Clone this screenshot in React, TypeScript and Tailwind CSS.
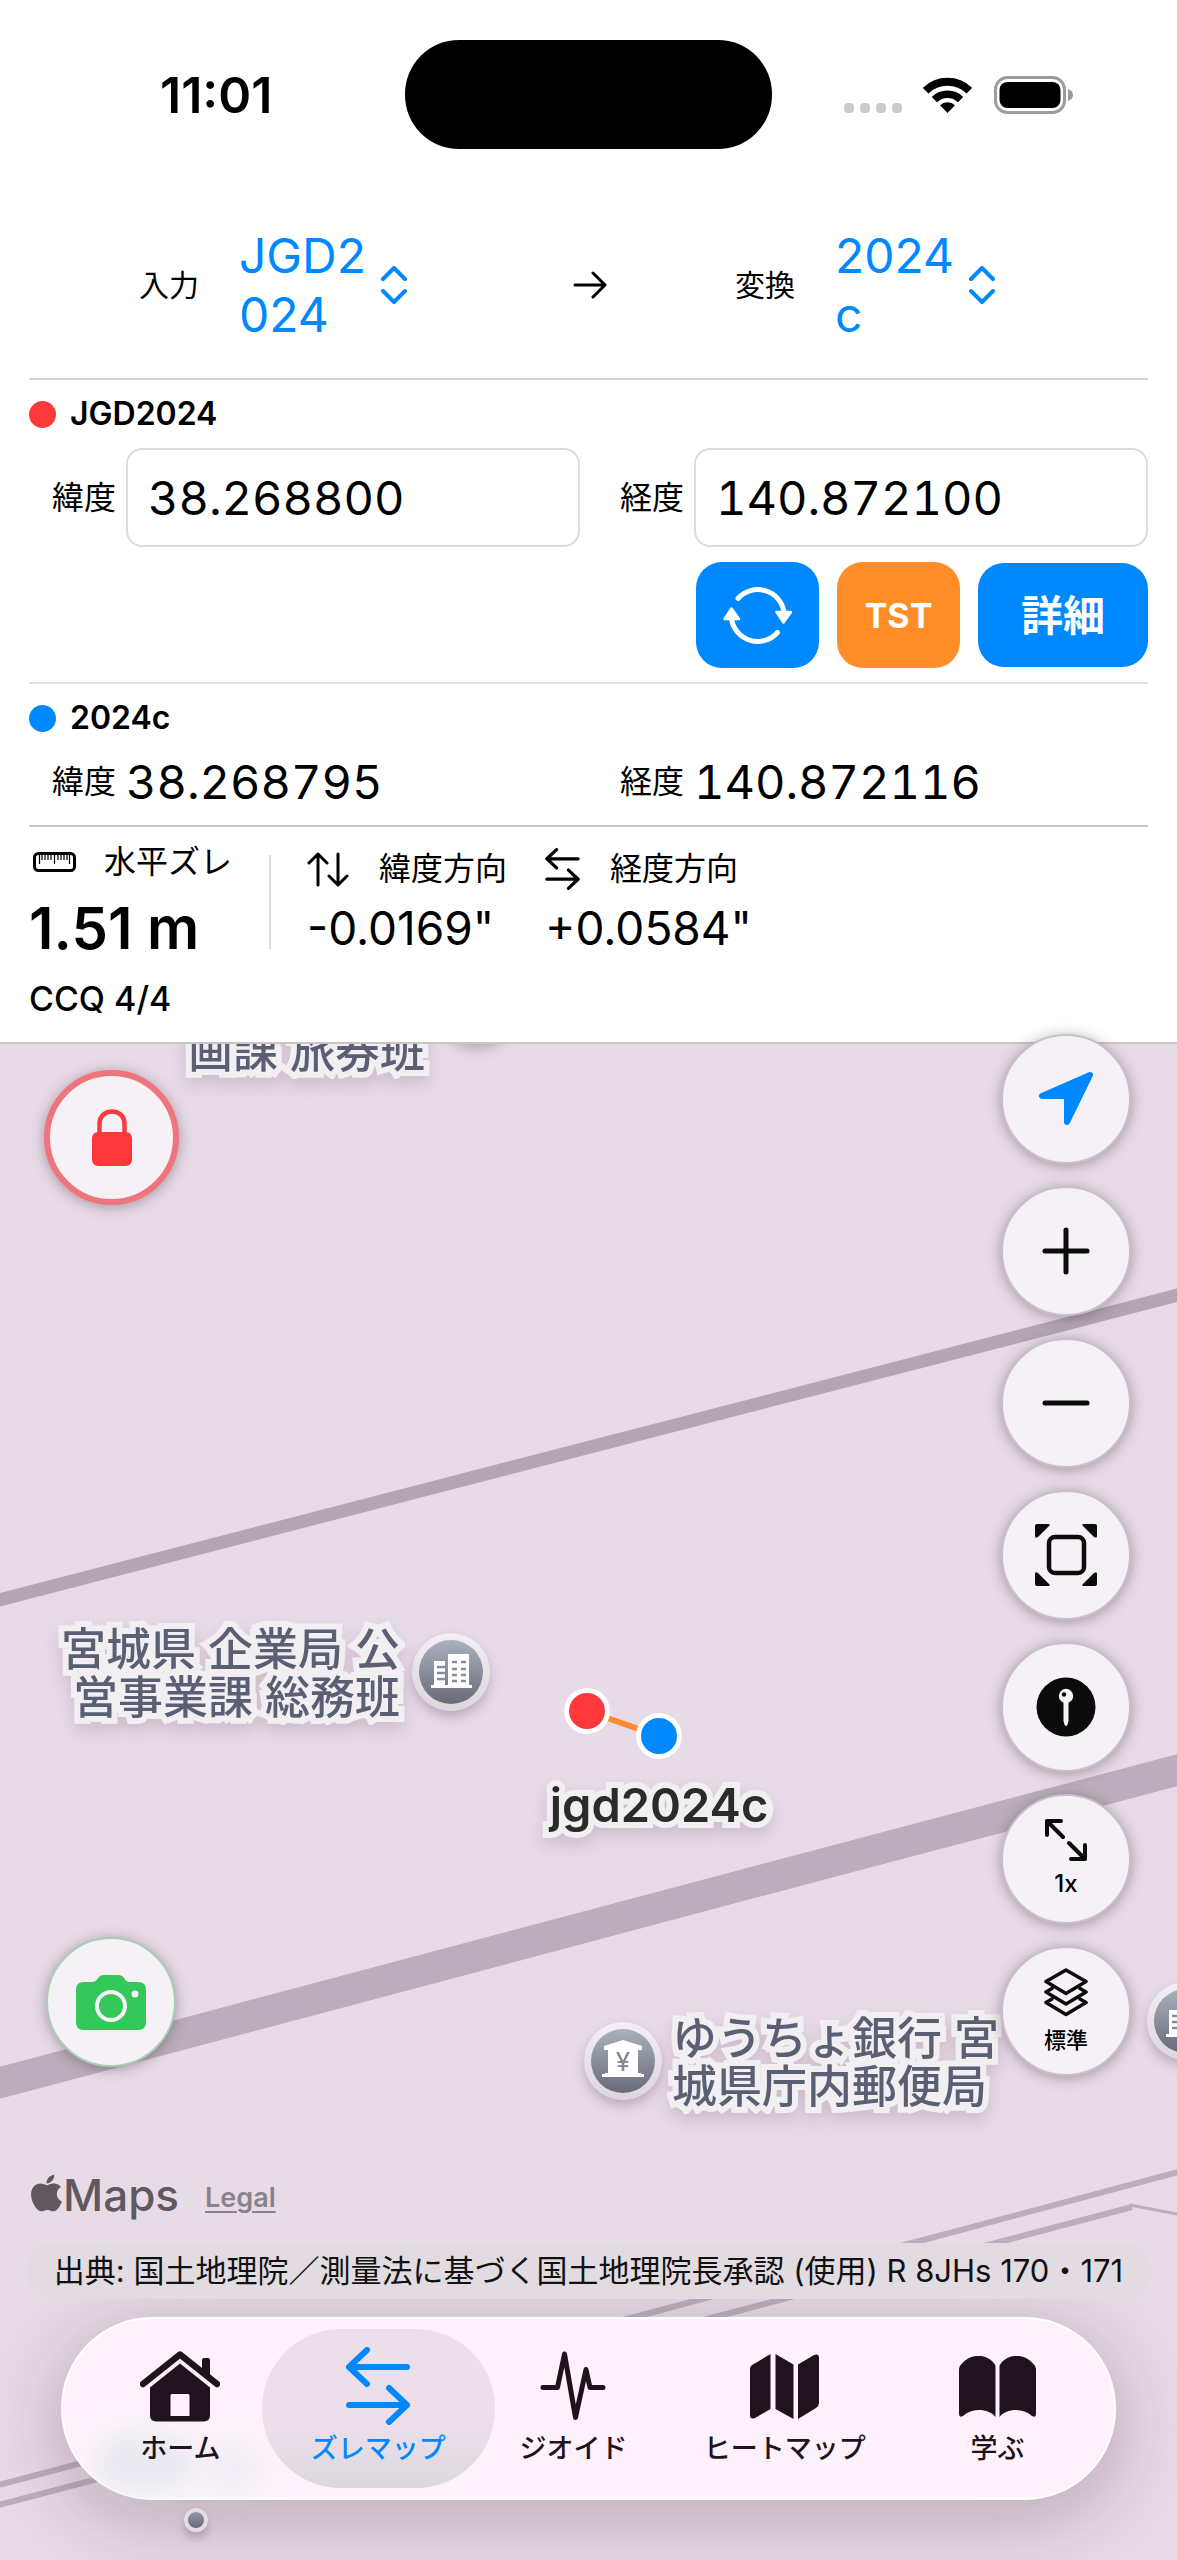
import { useState } from "react";
import type { ReactNode } from "react";
import { FaApple } from "react-icons/fa";

const DATUMS = ["JGD2024", "JGD2011", "2024c", "WGS84"];

interface IconProps {
    className?: string;
}

/* ---------- icons ---------- */

function WifiIcon() {
    return (
        <svg className="w-[49px] h-[36px]" viewBox="0 0 49 36" fill="none" stroke="#000" strokeWidth="8" aria-hidden="true">
            <path d="M2.6 13.7A31.5 31.5 0 0 1 46.4 13.7" />
            <path d="M11.4 22.6A18.8 18.8 0 0 1 37.6 22.6" strokeWidth="7.5" />
            <path d="M24.5 36L17 28.2A10.8 10.8 0 0 1 32 28.2Z" fill="#000" stroke="none" />
        </svg>
    );
}

function BatteryIcon() {
    return (
        <svg className="w-[79px] h-[38px]" viewBox="0 0 79 38" aria-hidden="true">
            <rect x="1.5" y="1.5" width="69" height="35" rx="12" fill="none" stroke="#9c9c9c" strokeWidth="3" />
            <rect x="5.5" y="6" width="61" height="26" rx="8" />
            <path d="M74 13C77 14 79 16 79 19S77 24 74 25Z" fill="#9c9c9c" />
        </svg>
    );
}

function ChevronUpDownIcon() {
    return (
        <svg className="w-[28px] h-[38px]" viewBox="0 0 28 38" fill="none" stroke="currentColor" strokeWidth="4" strokeLinecap="round" strokeLinejoin="round" aria-hidden="true">
            <path d="M3 13L14 2L25 13M3 25L14 36L25 25" />
        </svg>
    );
}

function ArrowRightIcon() {
    return (
        <svg className="w-[34px] h-[28px]" viewBox="0 0 34 28" fill="none" stroke="#000" strokeWidth="3" strokeLinecap="round" strokeLinejoin="round" aria-hidden="true">
            <path d="M2 14H32M20 2L32 14L20 26" />
        </svg>
    );
}

function SyncIcon() {
    return (
        <svg className="w-[69px] h-[59px]" viewBox="0 0 69 59" fill="none" stroke="#fff" strokeWidth="5" strokeLinecap="round" aria-hidden="true">
            <path d="M15 12.5A26.500 26.500 0 0 1 61 26" />
            <path d="M54.5 46.500A26.500 26.500 0 0 1 8.500 33" />
            <path d="M53.500 26H68L60.500 36.500Z" fill="#fff" strokeWidth="2.500" strokeLinejoin="round" />
            <path d="M1.500 33H16L8.500 22.500Z" fill="#fff" strokeWidth="2.500" strokeLinejoin="round" />
        </svg>
    );
}

function RulerIcon() {
    return (
        <svg className="w-[43px] h-[20px]" viewBox="0 0 43 20" fill="none" stroke="#000" aria-hidden="true">
            <rect x="1.5" y="1.5" width="40" height="17" rx="4" strokeWidth="3" />
            <path d="M6.500 2V12M9 2V8M12 2V8M15 2V8M18 2V8M21.500 2V12M25 2V8M28 2V8M31 2V8M34 2V8M36.500 2V12" strokeWidth="1.2" />
        </svg>
    );
}

function UpDownIcon() {
    return (
        <svg className="w-[42px] h-[35px]" viewBox="0 0 42 35" fill="none" stroke="#000" strokeWidth="3" strokeLinecap="round" strokeLinejoin="round" aria-hidden="true">
            <path d="M11 33V2M2 11L11 2L20 11M31 2V33M22 24L31 33L40 24" />
        </svg>
    );
}

function SwapIcon({ className }: IconProps) {
    return (
        <svg className={className} viewBox="0 0 64 78" fill="none" stroke="currentColor" strokeWidth="6" strokeLinecap="round" strokeLinejoin="round" aria-hidden="true">
            <path d="M61 20H3M21 3L3 20L21 37M3 58H61M43 41L61 58L43 75" />
        </svg>
    );
}

function LockIcon() {
    return (
        <svg className="w-[40px] h-[57px]" viewBox="0 0 40 57" aria-hidden="true">
            <rect y="23" width="40" height="34" rx="6" fill="#ff383c" />
            <path d="M7.500 25V15C7.500 7 13 2.500 20 2.500S32.500 7 32.500 15V25" fill="none" stroke="#ff383c" strokeWidth="4.500" />
        </svg>
    );
}

function CameraIcon() {
    return (
        <svg className="w-[70px] h-[55px]" viewBox="0 0 70 55" aria-hidden="true">
            <path d="M8 7H16C19 7 20.500 5.500 22 3C23.500 1 25 0 28 0H42C45 0 46.500 1 48 3C49.500 5.500 51 7 54 7H62C67.500 7 70 10 70 15V47C70 52 67.500 55 62 55H8C2.500 55 0 52 0 47V15C0 10 2.500 7 8 7Z" fill="#34c759" />
            <circle cx="35" cy="31" r="14" fill="none" stroke="#f6f1f6" strokeWidth="4" />
            <circle cx="59" cy="19" r="3.500" fill="#f6f1f6" />
        </svg>
    );
}

function LocationIcon() {
    return (
        <svg className="w-[56px] h-[56px]" viewBox="0 0 56 56" fill="#0088ff" stroke="#0088ff" strokeWidth="6" strokeLinejoin="round" aria-hidden="true">
            <path d="M52 4L4 25H29V51Z" />
        </svg>
    );
}

function PlusIcon() {
    return (
        <svg className="w-[48px] h-[48px]" viewBox="0 0 48 48" stroke="#0b0b0b" strokeWidth="5" strokeLinecap="round" aria-hidden="true">
            <path d="M3 24H45M24 3V45" />
        </svg>
    );
}

function MinusIcon() {
    return (
        <svg className="w-[48px] h-[48px]" viewBox="0 0 48 48" stroke="#0b0b0b" strokeWidth="5" strokeLinecap="round" aria-hidden="true">
            <path d="M3 24H45" />
        </svg>
    );
}

function FitIcon() {
    return (
        <svg className="w-[62px] h-[62px]" viewBox="0 0 62 62" fill="#0b0b0b" aria-hidden="true">
            <rect x="14" y="13" width="35" height="36" rx="6" fill="none" stroke="#0b0b0b" strokeWidth="4.500" />
            <path d="M2 0H13Q16 0 14 2L3 13Q0 15 0 12V2Q0 0 2 0Z" />
            <path d="M60 0H49Q46 0 48 2L59 13Q62 15 62 12V2Q62 0 60 0Z" />
            <path d="M2 62H13Q16 62 14 60L3 49Q0 47 0 50V60Q0 62 2 62Z" />
            <path d="M60 62H49Q46 62 48 60L59 49Q62 47 62 50V60Q62 62 60 62Z" />
        </svg>
    );
}

function PinIcon() {
    return (
        <svg className="w-[60px] h-[60px]" viewBox="0 0 60 60" aria-hidden="true">
            <circle cx="30" cy="30" r="29.500" fill="#0b0b0b" />
            <path d="M27.500 24H32.500V44Q31.500 49 30 49Q28.500 49 27.500 44Z" fill="#f6f1f6" />
            <circle cx="30" cy="19" r="7.200" fill="#f6f1f6" />
            <circle cx="28" cy="17.500" r="2.200" fill="#0b0b0b" />
        </svg>
    );
}

function ExpandIcon() {
    return (
        <svg className="w-[42px] h-[42px]" viewBox="0 0 42 42" fill="none" stroke="#0b0b0b" strokeWidth="4" strokeLinecap="round" strokeLinejoin="round" aria-hidden="true">
            <path d="M2 16V2H16M2 2L18 18M40 26V40H26M40 40L24 24" />
        </svg>
    );
}

function LayersIcon() {
    return (
        <svg className="w-[44px] h-[49px]" viewBox="0 0 44 49" fill="none" stroke="#0b0b0b" strokeWidth="3.500" strokeLinejoin="round" strokeLinecap="round" aria-hidden="true">
            <path d="M22 2L42 13.500L22 25.500L2 13.500Z" />
            <path d="M8 20.500L2 24L22 36L42 24L36 20.500" />
            <path d="M8 31L2 34.500L22 46.500L42 34.500L36 31" />
        </svg>
    );
}

function HomeIcon() {
    return (
        <svg className="w-[80px] h-[71px]" viewBox="0 0 80 71" aria-hidden="true">
            <path d="M3 33L40 3.500L77 33" fill="none" stroke="currentColor" strokeWidth="6.500" strokeLinecap="round" strokeLinejoin="round" />
            <path d="M62 20V9Q62 7 64 7H68Q70 7 70 9V28Z" fill="currentColor" />
            <path fillRule="evenodd" d="M40 12.500L70 36.500V64Q70 70.500 63.500 70.500H16.500Q10 70.500 10 64V36.500ZM32 43Q30.500 43 30.500 44.500V65H49.500V44.500Q49.500 43 48 43Z" fill="currentColor" />
        </svg>
    );
}

function PulseIcon() {
    return (
        <svg className="w-[66px] h-[70px]" viewBox="0 0 66 70" fill="none" stroke="currentColor" strokeWidth="5" strokeLinecap="round" strokeLinejoin="round" aria-hidden="true">
            <path d="M3 36.500H17.500L24.500 3L35.500 66.500L46 18.500L50 36.500H63" />
        </svg>
    );
}

function MapIcon() {
    return (
        <svg className="w-[69px] h-[65px]" viewBox="0 0 69 65" fill="currentColor" aria-hidden="true">
            <path d="M0 15Q0 12 3 10.500L20.500 0V55L5 64Q0 66 0 61Z" />
            <path d="M25.500 0L43.500 10.500V65L25.500 55Z" />
            <path d="M48 10.500L64 1Q69 -1 69 4V49Q69 52 66 54L48 65Z" />
        </svg>
    );
}

function BookIcon() {
    return (
        <svg className="w-[77px] h-[61px]" viewBox="0 0 77 61" fill="currentColor" aria-hidden="true">
            <path d="M0 13Q0 10 3 7.500C12 -2.500 26 -2.500 34 6Q36.500 8.500 36.500 11V61C29 52 13 52 4 60Q0 62 0 58Z" />
            <path d="M77 13Q77 10 74 7.500C65 -2.500 51 -2.500 43 6Q40.500 8.500 40.500 11V61C48 52 64 52 73 60Q77 62 77 58Z" />
        </svg>
    );
}

/* ---------- small parts ---------- */

function DatumPicker({ label, id, lines, value, onChange }: { label: string; id: string; lines: string[]; value: string; onChange: (v: string) => void }) {
    return (
        <div className="flex items-center">
            <label htmlFor={id} className="w-[100px] text-[30px]">{label}</label>
            <div className="relative flex items-center gap-[14px] text-[#0088ff]">
                <div className="text-[48px] leading-[59px]" aria-hidden="true">
                    {lines.map((line) => (
                        <div key={line}>{line}</div>
                    ))}
                </div>
                <ChevronUpDownIcon />
                <select id={id} value={value} onChange={(e) => onChange(e.target.value)} className="absolute inset-0 opacity-0">
                    {DATUMS.map((d) => (
                        <option key={d}>{d}</option>
                    ))}
                </select>
            </div>
        </div>
    );
}

function DatumHeading({ name, dot }: { name: string; dot: string }) {
    return (
        <h2 className="flex items-center gap-[14px] h-10 text-[32px] font-semibold">
            <span className={`w-[27px] h-[27px] rounded-full ${dot}`} />
            {name}
        </h2>
    );
}

function RoundButton({ label, children }: { label: string; children: ReactNode }) {
    return (
        <button
            aria-label={label}
            className="w-[130px] h-[130px] rounded-full bg-[#f6f1f6] border-2 border-[#c9bfc9] shadow-[0_2px_14px_rgba(60,35,55,0.4)] flex flex-col items-center justify-center"
        >
            {children}
        </button>
    );
}

function PlaceBadge({ children }: { children?: ReactNode }) {
    return (
        <svg className="w-[78px] h-[78px] -mt-1 shrink-0 rounded-full shadow-[0_6px_12px_rgba(90,60,85,0.3)]" viewBox="-39 -39 78 78" aria-hidden="true">
            <defs>
                <linearGradient id="badge" x1="0" y1="0" x2="0" y2="1">
                    <stop offset="0" stopColor="#a9b1bc" />
                    <stop offset="1" stopColor="#696a7a" />
                </linearGradient>
                <linearGradient id="badge-ring" x1="0" y1="0" x2="0" y2="1">
                    <stop offset="0" stopColor="#f5eff5" />
                    <stop offset="1" stopColor="#dcd6dc" />
                </linearGradient>
            </defs>
            <circle r="39" fill="url(#badge-ring)" />
            <circle r="32" fill="url(#badge)" />
            {children}
        </svg>
    );
}

function BuildingGlyph() {
    return (
        <g>
            <path d="M-3 -18H18V14H-3ZM-17 -11H-6V14H-17ZM-20 13H21V16H-20Z" fill="#fff" />
            <path d="M1 -10H6M10 -10H15M1 -3H6M10 -3H15M1 3H6M10 3H15M1 9H6M10 9H15M-14 -5H-5M-14 1H-5M-14 7H-5" stroke="#878d9a" strokeWidth="2.500" />
        </g>
    );
}

const HALO = "[-webkit-text-stroke:12px_#f1eff1] [paint-order:stroke_fill] drop-shadow-[0_8px_8px_rgba(120,80,110,0.22)]";

function PlaceLabel({ lines }: { lines: string[] }) {
    return (
        <p className={`text-[45px] leading-[48px] font-medium text-[#5b5f73] whitespace-nowrap ${HALO}`}>
            {lines.map((line) => (
                <span key={line} className="block">{line}</span>
            ))}
        </p>
    );
}

const TABS = [
    { id: "home", label: "ホーム", icon: <HomeIcon /> },
    { id: "zure", label: "ズレマップ", icon: <SwapIcon className="w-[64px] h-[78px]" /> },
    { id: "geoid", label: "ジオイド", icon: <PulseIcon /> },
    { id: "heat", label: "ヒートマップ", icon: <MapIcon /> },
    { id: "learn", label: "学ぶ", icon: <BookIcon /> },
];

export default function App() {
    const [input, setInput] = useState("JGD2024");
    const [output, setOutput] = useState("2024c");
    const [lat, setLat] = useState("38.268800");
    const [lng, setLng] = useState("140.872100");
    const [tab, setTab] = useState("zure");

    const fieldClass = "flex-1 min-w-0 h-[99px] rounded-2xl border-2 border-[#dcdcdc] bg-white pl-5 text-[47px] tabular-nums";

    return (
        <div className="min-h-screen flex flex-col bg-white text-black font-['Inter','Noto_Sans_CJK_JP',sans-serif]">
            {/* Status bar */}
            <header className="grid grid-cols-[1fr_auto_1fr] items-center pt-10">
                <div className="pl-[160px] text-[50px] leading-[60px] font-semibold">11:01</div>
                <div className="w-[367px] h-[109px] rounded-[54px] bg-black" />
                <div className="flex items-center pl-[72px]">
                    <div className="flex gap-[6px] pt-[26px] mr-[21px]">
                        {[0, 1, 2, 3].map((i) => (
                            <span key={i} className="w-[10px] h-[10px] rounded-[4px] bg-[#cbcbcb]" />
                        ))}
                    </div>
                    <WifiIcon />
                    <div className="ml-[22px]"><BatteryIcon /></div>
                </div>
            </header>

            <div className="px-[29px] border-b-2 border-[#c9c5c9] pb-[23px]">
                {/* Datum pickers */}
                <div className="flex items-center justify-center pt-[77px] pb-[34px] pr-[42px]">
                    <DatumPicker id="datum-in" label="入力" lines={["JGD2", "024"]} value={input} onChange={setInput} />
                    <div className="ml-[165px] mr-[128px]"><ArrowRightIcon /></div>
                    <DatumPicker id="datum-out" label="変換" lines={["2024", "c"]} value={output} onChange={setOutput} />
                </div>

                {/* Input coordinates */}
                <section className="border-t-2 border-[#d3d3d3] py-[14px]">
                    <DatumHeading name="JGD2024" dot="bg-[#ff383c]" />
                    <div className="mt-[14px] pl-[23px] grid grid-cols-2 gap-10">
                        <div className="flex items-center gap-[10px]">
                            <label htmlFor="lat" className="text-[32px]">緯度</label>
                            <input id="lat" value={lat} onChange={(e) => setLat(e.target.value)} className={fieldClass} />
                        </div>
                        <div className="flex items-center gap-[10px]">
                            <label htmlFor="lng" className="text-[32px]">経度</label>
                            <input id="lng" value={lng} onChange={(e) => setLng(e.target.value)} className={fieldClass} />
                        </div>
                    </div>
                    <div className="mt-[15px] flex justify-end items-center gap-[18px] text-white font-bold">
                        <button aria-label="再計算" className="w-[123px] h-[106px] rounded-[26px] bg-[#0088ff] flex items-center justify-center">
                            <SyncIcon />
                        </button>
                        <button className="w-[123px] h-[106px] rounded-[26px] bg-[#ff8d28] text-[34px]">TST</button>
                        <button className="w-[170px] h-[104px] rounded-[26px] bg-[#0088ff] text-[42px]">詳細</button>
                    </div>
                </section>

                {/* Converted coordinates */}
                <section className="border-t-2 border-[#e0e0e0] pt-[14px] pb-[13px]">
                    <DatumHeading name="2024c" dot="bg-[#0088ff]" />
                    <dl className="mt-[14px] pl-[23px] grid grid-cols-2 gap-10">
                        <div className="flex items-center gap-[10px]">
                            <dt className="text-[32px]">緯度</dt>
                            <dd className="text-[47px] leading-[60px] tabular-nums">38.268795</dd>
                        </div>
                        <div className="flex items-center gap-[10px]">
                            <dt className="text-[32px]">経度</dt>
                            <dd className="text-[47px] leading-[60px] tabular-nums">140.872116</dd>
                        </div>
                    </dl>
                </section>

                {/* Offsets */}
                <section className="border-t-2 border-[#c6c6c6] pt-[18px]">
                    <dl className="flex">
                        <div className="w-[240px]">
                            <dt className="flex items-center gap-[28px] h-[34px] pl-1 text-[32px]">
                                <RulerIcon />水平ズレ
                            </dt>
                            <dd className="mt-[19px] text-[58px] leading-[60px] font-semibold">1.51 m</dd>
                        </div>
                        <div className="w-[2px] h-[94px] mt-[10px] mr-9 bg-[#dcdcdc]" />
                        <div className="w-[238px]">
                            <dt className="flex items-center gap-[30px] h-12 text-[32px]">
                                <UpDownIcon />緯度方向
                            </dt>
                            <dd className="mt-[5px] text-[46px] leading-[60px]">-0.0169"</dd>
                        </div>
                        <div>
                            <dt className="flex items-center gap-[30px] h-12 text-[32px]">
                                <SwapIcon className="w-[35px] h-[42px]" />経度方向
                            </dt>
                            <dd className="mt-[5px] text-[46px] leading-[60px]">+0.0584"</dd>
                        </div>
                    </dl>
                    <p className="mt-[21px] text-[34px] leading-10 font-medium">CCQ 4/4</p>
                </section>
            </div>

            {/* Map */}
            <main className="relative flex-1 min-h-[1516px] bg-[#e8dbe8]">
                <div className="absolute inset-0 overflow-hidden">
                    <svg className="w-full h-full" viewBox="0 1044 1177 1516" preserveAspectRatio="xMidYMid slice" fill="none" stroke="#bbaebc" aria-hidden="true">
                        <path d="M-5 1601L1182 1294" stroke="#b2a6b3" strokeWidth="13" />
                        <path d="M-5 2084L800 1870L1182 1769" strokeWidth="31" />
                        <path d="M1182 2171L912 2243L631 2318L-5 2486" strokeWidth="6" />
                        <path d="M1132 2207L996 2243L715 2317L-5 2506" strokeWidth="6" />
                        <path d="M1130 2205L1182 2215" strokeWidth="3" />
                        <path d="M587 1711L659 1736" stroke="#ff8a34" strokeWidth="6" />
                        <circle cx="587" cy="1711" r="20.500" fill="#ff383c" stroke="#fff" strokeWidth="5" />
                        <circle cx="659" cy="1736" r="20.500" fill="#0088ff" stroke="#fff" strokeWidth="5" />
                    </svg>

                    <div className="absolute left-[188px] -top-[16px]"><PlaceLabel lines={["画課 旅券班"]} /></div>
                    <div className="absolute left-[438px] -top-[74px]">
                        <PlaceBadge><BuildingGlyph /></PlaceBadge>
                    </div>
                    <div className="absolute left-[61px] top-[582px] flex items-center gap-3 text-right">
                        <PlaceLabel lines={["宮城県 企業局 公", "営事業課 総務班"]} />
                        <PlaceBadge><BuildingGlyph /></PlaceBadge>
                    </div>
                    <div className="absolute left-[584px] top-[971px] flex items-center gap-[10px]">
                        <PlaceBadge>
                            <path d="M0 -21L19 -15V-11H15V12H18V13H21V16H-21V13H-18V12H-15V-11H-19V-15Z" fill="#fff" />
                            <text x="0" y="10" textAnchor="middle" fontSize="26" fill="#7e8490">¥</text>
                        </PlaceBadge>
                        <PlaceLabel lines={["ゆうちょ銀行 宮", "城県庁内郵便局"]} />
                    </div>
                    <div className="absolute -right-[48px] top-[942px]">
                        <PlaceBadge><BuildingGlyph /></PlaceBadge>
                    </div>
                    <p className={`absolute left-[659px] top-[733px] -translate-x-1/2 text-[47px] leading-[56px] font-semibold text-[#2b2b2b] ${HALO}`}>jgd2024c</p>
                </div>

                <button aria-label="ロック" className="absolute left-11 top-[26px] w-[135px] h-[135px] rounded-full bg-[#f6f1f6] border-6 border-[#f0747b] shadow-[0_2px_14px_rgba(60,35,55,0.4)] flex items-center justify-center">
                    <LockIcon />
                </button>
                <button aria-label="カメラ" className="absolute left-[46px] top-[893px] w-[130px] h-[130px] rounded-full bg-[#f6f1f6] border-2 border-[#a5cfb2] shadow-[0_2px_14px_rgba(60,35,55,0.4)] flex items-center justify-center">
                    <CameraIcon />
                </button>

                <div className="absolute right-[46px] -top-[10px] flex flex-col gap-[22px]">
                    <RoundButton label="現在地"><LocationIcon /></RoundButton>
                    <RoundButton label="拡大"><PlusIcon /></RoundButton>
                    <RoundButton label="縮小"><MinusIcon /></RoundButton>
                    <RoundButton label="全体表示"><FitIcon /></RoundButton>
                    <RoundButton label="ピン"><PinIcon /></RoundButton>
                    <RoundButton label="倍率">
                        <ExpandIcon />
                        <span className="mt-2 text-[24px] leading-[30px] font-medium">1x</span>
                    </RoundButton>
                    <RoundButton label="地図の種類">
                        <LayersIcon />
                        <span className="mt-2 text-[22px] leading-[30px] font-medium">標準</span>
                    </RoundButton>
                </div>

                {/* Attribution and tab bar */}
                <div className="absolute inset-x-0 bottom-[60px]">
                    <div className="flex items-center pl-[30px] mb-[20px]">
                        <FaApple className="w-[33px] h-[42px] -mt-1 text-[#5f585e]" />
                        <span className="text-[44px] leading-[56px] font-medium text-[#5f585e]">Maps</span>
                        <a href="#legal" className="ml-[26px] mt-[6px] text-[27px] font-semibold text-[#8a818a] underline decoration-2 underline-offset-4">Legal</a>
                    </div>
                    <p className="relative z-10 mx-[26px] mb-[18px] h-[56px] rounded-[28px] bg-[#e2dbe1] flex items-center justify-center text-[31px] text-[#111] whitespace-nowrap">
                        出典: 国土地理院／測量法に基づく国土地理院長承認 (使用) R 8JHs 170・171
                    </p>
                    <nav className="relative mx-[61px] h-[183px] px-5 rounded-[91px] bg-[#fdf2fb] border-2 border-white shadow-[0_16px_70px_10px_rgba(95,60,80,0.28)] grid grid-cols-[194fr_200fr_189fr_232fr_192fr]">
                        {/* Blurred map label showing through the glass */}
                        <span className="absolute left-8 bottom-2 w-[100px] h-[56px] rounded-full bg-[#d5e3e6] opacity-50 blur-md" />
                        <span className="absolute left-[140px] bottom-2 w-[60px] h-[44px] rounded-full bg-[#d5e3e6] opacity-40 blur-lg" />
                        {TABS.map((t) => (
                            <button
                                key={t.id}
                                onClick={() => setTab(t.id)}
                                className={`relative flex flex-col items-center pt-[28px] text-[27px] font-medium ${tab === t.id ? "text-[#0088ff]" : "text-[#20131e]"}`}
                            >
                                {tab === t.id && <span className="absolute -inset-x-4 inset-y-[10px] rounded-[79px] bg-linear-to-b from-[#ecdfea] from-60% to-[#dcd8de]" />}
                                <span className="relative h-[78px] flex items-center">{t.icon}</span>
                                <span className="relative mt-[6px] leading-9 whitespace-nowrap">{t.label}</span>
                            </button>
                        ))}
                    </nav>
                    <span className="absolute left-[184px] -bottom-8 w-6 h-6 rounded-full border-4 border-[#e3dce3] bg-linear-to-b from-[#9299a5] to-[#696a7a] shadow-[0_6px_8px_rgba(90,60,85,0.3)]" />
                </div>
            </main>
        </div>
    );
}
